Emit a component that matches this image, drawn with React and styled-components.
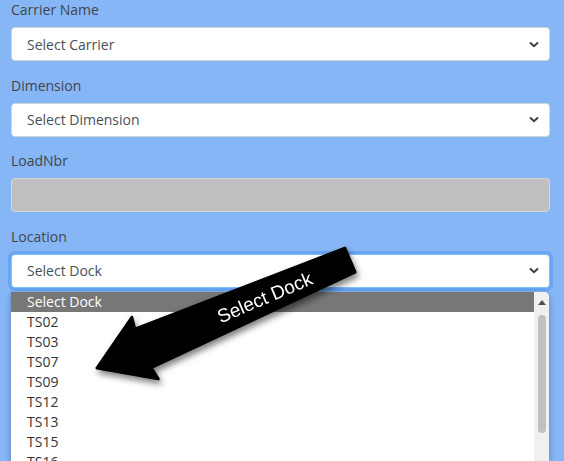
import React from 'react';
import styled, {createGlobalStyle} from 'styled-components';

const Global = createGlobalStyle`
	html, body {
		margin: 0;
		padding: 0;
		overflow: hidden;
		background: #86b6f6;
	}
	body {
		font-family: "Open Sans", "Liberation Sans", sans-serif;
	}
`

const Page = styled.div`
	position: relative;
	width: 564px;
	height: 461px;
	box-sizing: border-box;
	padding: 0 14px 0 11px;
	display: flex;
	flex-direction: column;
	gap: 14.5px;
	overflow: hidden;
`

const Group = styled.div`
	position: relative;
	display: flex;
	flex-direction: column;
	gap: 7px;
`

const Label = styled.label`
	font-size: 14px;
	line-height: 20px;
	color: #40464c;
`

const Control = styled.div`
	box-sizing: border-box;
	height: 34px;
	display: flex;
	align-items: center;
	justify-content: space-between;
	padding: 0 10px 0 15px;
	border: 1px solid ${p => p.$focused ? '#80bdff' : '#d3d7db'};
	border-radius: 4px;
	background: ${p => p.$disabled ? '#c0c0c0' : '#fff'};
	box-shadow: ${p => p.$focused ? '0 0 0 3px rgba(0, 110, 230, 0.22)' : 'none'};
	font-size: 14px;
	color: #495057;
`

const Chevron = styled.svg`
	width: 10px;
	height: 7px;
	flex: none;
`

const Dropdown = styled.div`
	position: absolute;
	top: calc(100% + 4px);
	left: 0;
	right: 1px;
	height: 200px;
	display: flex;
	background: #fff;
	border-top-right-radius: 5px;
	box-shadow: 0 2px 6px rgba(0, 0, 0, 0.3);
	overflow: hidden;
	z-index: 2;
`

const Options = styled.ul`
	flex: 1;
	margin: 0;
	padding: 0;
	list-style: none;
`

const Option = styled.li`
	height: 20px;
	line-height: 20px;
	padding-left: 16px;
	font-size: 14px;
	color: ${p => p.$active ? '#fff' : '#333'};
	background: ${p => p.$active ? '#777' : 'transparent'};
`

const Track = styled.div`
	width: 15px;
	flex: none;
	background: #f0f0f0;
	display: flex;
	flex-direction: column;
	align-items: center;
	padding-top: 8px;
`

const UpArrow = styled.div`
	width: 0;
	height: 0;
	border-left: 4px solid transparent;
	border-right: 4px solid transparent;
	border-bottom: 5px solid #505050;
`

const Thumb = styled.div`
	margin-top: 10px;
	width: 8px;
	height: 118px;
	border-radius: 4px;
	background: #c1c1c1;
`

const Callout = styled.svg`
	position: absolute;
	left: 0;
	top: 0;
	width: 564px;
	height: 461px;
	pointer-events: none;
	z-index: 5;
	filter: drop-shadow(2px 4px 3px rgba(0, 0, 0, 0.5));
`

const Select = ({value, focused}) => (
	<Control $focused={focused}>
		<span>{value}</span>
		<Chevron viewBox="0 0 10 7">
			<path d="M1 1.5 L5 5.2 L9 1.5" fill="none" stroke="#3b4046" strokeWidth="2" />
		</Chevron>
	</Control>
)

const docks = ['TS02', 'TS03', 'TS07', 'TS09', 'TS12', 'TS13', 'TS15', 'TS16', 'TS18']

const App = () => {
	return (
		<Page>
			<Global/>
			<Group>
				<Label>Carrier Name</Label>
				<Select value="Select Carrier"/>
			</Group>
			<Group>
				<Label>Dimension</Label>
				<Select value="Select Dimension"/>
			</Group>
			<Group>
				<Label>LoadNbr</Label>
				<Control $disabled/>
			</Group>
			<Group>
				<Label>Location</Label>
				<Select value="Select Dock" focused/>
				<Dropdown>
					<Options>
						<Option $active>Select Dock</Option>
						{docks.map(d => <Option key={d}>{d}</Option>)}
					</Options>
					<Track>
						<UpArrow/>
						<Thumb/>
					</Track>
				</Dropdown>
			</Group>

			<Callout viewBox="0 0 564 461">
				<g transform="translate(97 368) rotate(-23.1)">
					<polygon
						points="0,0 52,34 50,21 275,13 275,-13 50,-21 52,-33"
						fill="#000"
						stroke="#000"
						strokeWidth="3"
						strokeLinejoin="round"
					/>
					<text
						x="182"
						y="1"
						fill="#fff"
						fontSize="19"
						fontFamily='"Liberation Sans", Arial, sans-serif'
						textAnchor="middle"
						dominantBaseline="central"
					>Select Dock</text>
				</g>
			</Callout>
		</Page>
	)
}

export default App
